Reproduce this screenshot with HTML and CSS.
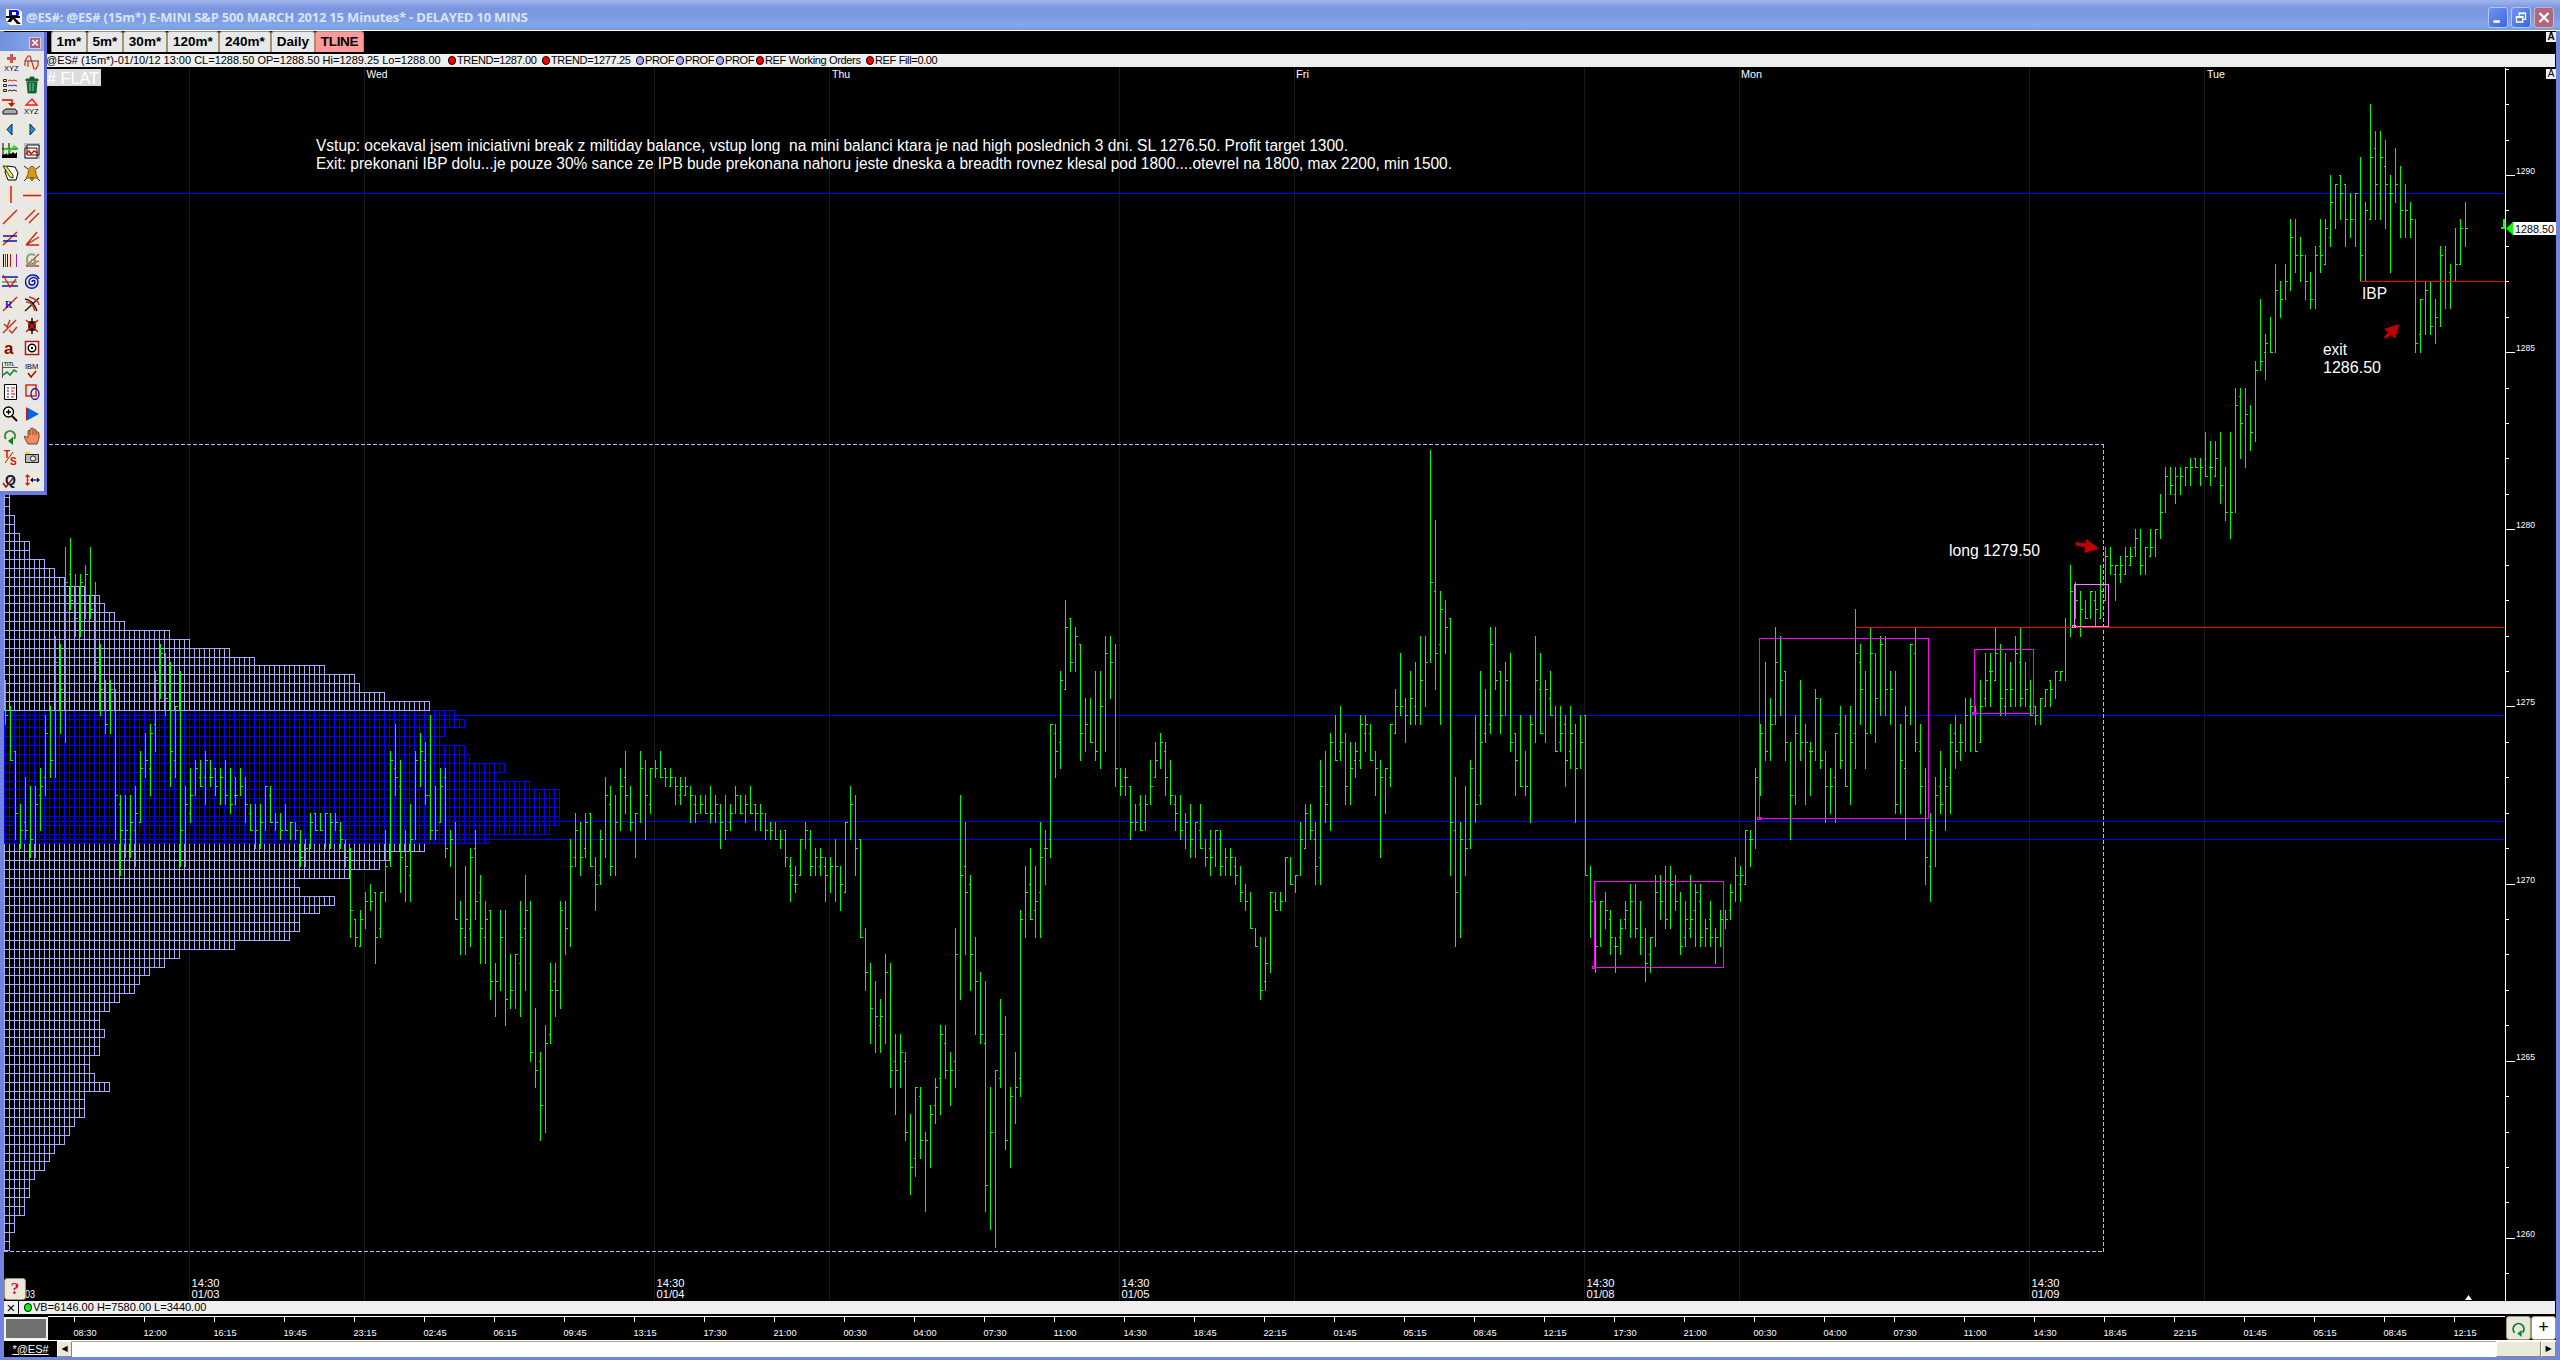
FILE: index.html
```html
<!DOCTYPE html>
<html lang="en">
<head>
<meta charset="utf-8">
<title>@ES# (15m*)</title>
<link rel="stylesheet" href="styles.css">
</head>
<body>
<div class="window">
  <header class="titlebar">
    <svg class="logo" viewBox="0 0 16 16"><path d="M0 0h12l4 3v13H4L0 12z" fill="#fff"/><path d="M3 1h7q4 0 3 4t-4 3H3zM6 3v3h4V3z" fill="#0a0ad0" fill-rule="evenodd"/><path d="M0 7h14v2H9l6 6h-4L7 10l-2 3H1l3-4H0z" fill="#000"/></svg>
    <h1 class="title">@ES#: @ES# (15m*) E-MINI S&amp;P 500 MARCH 2012 15 Minutes* - DELAYED 10 MINS</h1>
    <div class="winbtns">
      <svg class="winbtn" viewBox="0 0 20 20"><rect x="5" y="13" width="7" height="3" fill="#fff"/></svg>
      <svg class="winbtn" viewBox="0 0 20 20"><path d="M8 8V5.500h7V12h-2M5 9.500h7V15H5z" fill="none" stroke="#fff" stroke-width="1.400"/><path d="M7.300 5.500h8.400M4.300 9.200h8.400" stroke="#fff" stroke-width="2"/></svg>
      <svg class="winbtn winbtn-close" viewBox="0 0 20 20"><path d="M5 5l10 10M15 5L5 15" stroke="#fff" stroke-width="2.400"/></svg>
    </div>
  </header>
  <main class="content">
    <nav class="tabs">
      <span class="tab t36">1m*</span><span class="tab t36">5m*</span><span class="tab t44">30m*</span><span class="tab t52">120m*</span><span class="tab t52">240m*</span><span class="tab t44">Daily</span><span class="tab t49 tab-on">TLINE</span>
      <span class="flag flag-bold">A</span>
    </nav>
    <div class="info">
      <span class="readout">@ES# (15m*)-01/10/12 13:00 CL=1288.50 OP=1288.50 Hi=1289.25 Lo=1288.00</span>
      <span class="study"><i class="dot red"></i>TREND=1287.00</span>
      <span class="study"><i class="dot red"></i>TREND=1277.25</span>
      <span class="study"><i class="dot lilac"></i>PROF</span>
      <span class="study"><i class="dot lilac"></i>PROF</span>
      <span class="study"><i class="dot lilac"></i>PROF</span>
      <span class="study"><i class="dot red"></i>REF Working Orders</span>
      <span class="study"><i class="dot red"></i>REF Fill=0.00</span>
    </div>
    <section class="plot">
      <svg id="chart" class="chart" viewBox="4 67 2552 1234"></svg>
      <span class="flag flag-plot">A</span>
      <span class="help">?</span>
    </section>
    <div class="status">
      <span class="statusclose">×</span>
      <span class="study wide"><i class="dot green"></i>VB=6146.00 H=7580.00 L=3440.00</span>
    </div>
    <div class="timeline">
      <span class="pager"></span>
      <svg id="times" class="times" viewBox="48 1316 2457 25"></svg>
      <span class="tool tool-refresh"><svg viewBox="0 0 20 20"><path d="M5 14A6 6 0 1 1 14 14" fill="none" stroke="#0a7d1a" stroke-width="2"/><path d="M8 15l5-4v8z" fill="#0a8a1a"/></svg></span>
      <span class="tool tool-add">+</span>
    </div>
    <footer class="scroll">
      <span class="sheet">*@ES#</span>
      <span class="arrow">◀</span>
      <span class="track"></span>
      <span class="thumb"></span>
      <span class="arrow">▶</span>
    </footer>
  </main>
</div>

<aside class="palette">
  <div class="palhead"><span class="palclose">×</span></div>
  <div class="icons">
    <svg viewBox="0 0 20 20"><path d="M10 1h3v3h3v3h-3v3h-3V7H7V4h3z" fill="#c55"/><text x="4" y="17.500" class="tiny">XYZ</text></svg>
    <svg viewBox="0 0 20 20"><path d="M3 8h14" stroke="#267" stroke-width="1.200"/><path d="M3 13V8L6 3h2l4 13h2l2-4V8M6 8v6" fill="none" stroke="#d22" stroke-width="1.200"/></svg>
    <svg viewBox="0 0 20 20"><path d="M3.500 4.500h3v2h-3zM3.500 9.500h3v2h-3zM3.500 14.500h3v2h-3z" fill="none" stroke="#222"/><path d="M8 6l2-1 2 1 2-1 3 1" stroke="#d22" fill="none"/><path d="M8 11l2-1 2 1 2-1 3 1" stroke="#22d" fill="none"/><path d="M8 16l2-1 2 1 2-1 3 1" stroke="#222" fill="none"/></svg>
    <svg viewBox="0 0 20 20"><path d="M4 4h12v2H4zM8 2h4v2H8zM5 7h10l-1 11H6z" fill="#17683f" stroke="#052" stroke-width=".8"/><path d="M8 8v8M11 8v8" stroke="#7c9"/></svg>
    <svg viewBox="0 0 20 20"><path d="M2 3h10v4" fill="none" stroke="#d00" stroke-width="1.400"/><path d="M8 6h7l-3.500 4z" fill="#d00"/><path d="M3 14l3-2h9l2 2v3H3z" fill="#aaa" stroke="#111"/></svg>
    <svg viewBox="0 0 20 20"><path d="M10 2l5 6H4z" fill="none" stroke="#f11" stroke-width="1.300"/><text x="2" y="16.500" class="tiny">XYZ</text></svg>
    <svg viewBox="0 0 20 20"><path d="M12 5v11L7 10.500z" fill="#19e" stroke="#026"/></svg>
    <svg viewBox="0 0 20 20"><path d="M8 5v11l5-5.500z" fill="#19e" stroke="#026"/></svg>
    <svg viewBox="0 0 20 20"><path d="M2 17v-3l2-1 1 1 1-2 2 2 2-2 1 1 2-2 2 2 2-2v6z" fill="#000"/><path d="M3 2v15M9 2v15M2 8h16" stroke="#000"/><path d="M3 10l4-3 3 3 4-5 4 3" fill="none" stroke="#1e1" stroke-width="1.600"/></svg>
    <svg viewBox="0 0 20 20"><path d="M2 2h16v16H2z" fill="#bbb"/><path d="M5 4h12v10H5zM3 7h12v10H3z" fill="#fff" stroke="#111"/><path d="M4 13l3-3 2 3 3-3 4 2" fill="none" stroke="#d11" stroke-width="1.600"/></svg>
    <svg viewBox="0 0 20 20"><path d="M7 3l8 1 3 6-2 7H8L5 9z" fill="#fff" stroke="#000"/><path d="M3 3l3 0 7 9v3l-3-1z" fill="#ee4" stroke="#000" stroke-width=".8"/></svg>
    <svg viewBox="0 0 20 20"><path d="M2 3l4 3M18 3l-4 3M2 18l3-3M18 18l-3-3" stroke="#222"/><path d="M10 3q4 1 4 8l2 4H4l2-4q0-7 4-8zM8 15h4l-2 3z" fill="#d59a16" stroke="#742" stroke-width=".8"/></svg>
    <svg viewBox="0 0 20 20"><path d="M11 1v17" stroke="#e11" stroke-width="1.500"/></svg>
    <svg viewBox="0 0 20 20"><path d="M1 10.500h18" stroke="#d11" stroke-width="1.500"/></svg>
    <svg viewBox="0 0 20 20"><path d="M3 17L17 3" stroke="#c22" stroke-width="1.400"/></svg>
    <svg viewBox="0 0 20 20"><path d="M3 13L13 3M7 16L17 6" stroke="#c22" stroke-width="1.400"/></svg>
    <svg viewBox="0 0 20 20"><path d="M3 16L17 3" stroke="#c22" stroke-width="1.400"/><path d="M3 7h14M3 12h14" stroke="#11b" stroke-width="1.300"/></svg>
    <svg viewBox="0 0 20 20"><path d="M4 16L15 3M4 16l13-8M4 16h13" stroke="#c22" stroke-width="1.300"/></svg>
    <svg viewBox="0 0 20 20"><path d="M3.500 4v13" stroke="#111"/><path d="M5.500 4v13" stroke="#172"/><path d="M7.500 4v13" stroke="#11b"/><path d="M10.500 4v13" stroke="#c11"/><path d="M16.500 4v13" stroke="#82c"/></svg>
    <svg viewBox="0 0 20 20"><path d="M4 16L17 4M4 16l13-5M4 16h13" stroke="#d33" stroke-width="1.300"/><path d="M13 5Q5 2 5 10t8 4v-4H9" fill="none" stroke="#7a8" stroke-width="2"/></svg>
    <svg viewBox="0 0 20 20"><path d="M2 5h16M2 14h16" stroke="#11b" stroke-width="1.300"/><path d="M2 10h15" stroke="#172"/><path d="M3 3l7 12 6-8" fill="none" stroke="#c22" stroke-width="1.300"/></svg>
    <svg viewBox="0 0 20 20"><path d="M10 10a1.500 1.500 0 0 1 3 0a3 3 0 0 1-6 0a4.500 4.500 0 0 1 9 0a6 6 0 0 1-12.500 0a7 7 0 0 1 7-7q5 0 6.500 4" fill="none" stroke="#01c" stroke-width="1.400"/></svg>
    <svg viewBox="0 0 20 20"><path d="M3 17L17 3" stroke="#c22" stroke-width="1.400"/><text x="5" y="14" class="letter blue">R</text></svg>
    <svg viewBox="0 0 20 20"><path d="M3 17L17 4M3 5q8 1 12 12" stroke="#111" fill="none" stroke-width="1.300"/><path d="M4 8q7 0 9 9M7 3q9 2 10 8" stroke="#c33" fill="none" stroke-width="1.500"/></svg>
    <svg viewBox="0 0 20 20"><path d="M3 17L16 4M4 8l3 3 3-7M9 14l3 3 5-6" stroke="#b33" fill="none" stroke-width="1.500"/></svg>
    <svg viewBox="0 0 20 20"><path d="M10 2v16M7 6h6v8H7z" stroke="#111" fill="#111" stroke-width="1.500"/><path d="M4 4l12 12M16 4L4 16" stroke="#e11" stroke-width="1.400"/></svg>
    <svg viewBox="0 0 20 20"><text x="4" y="16" class="letter big">a</text></svg>
    <svg viewBox="0 0 20 20"><path d="M3.500 3.500h13v13h-13z" fill="#fff" stroke="#b11" stroke-width="1.500"/><circle cx="10" cy="10" r="3.800" fill="none" stroke="#000" stroke-width="1.500"/><circle cx="10" cy="10" r="1.200"/></svg>
    <svg viewBox="0 0 20 20"><path d="M2.500 2v16M2 7.500h16" stroke="#555"/><text x="4" y="6" class="micro">TITL</text><path d="M3 15l4-3 3 3 4-5 3 2" fill="none" stroke="#184" stroke-width="1.600"/></svg>
    <svg viewBox="0 0 20 20"><text x="3" y="9" class="tiny">IBM</text><path d="M6 13l3 4 5-6" fill="none" stroke="#911" stroke-width="1.500"/></svg>
    <svg viewBox="0 0 20 20"><path d="M4.500 2.500h12v15h-12z" fill="#fff" stroke="#000"/><path d="M7 6h2M7 9h2M7 12h2M7 15h2" stroke="#111"/><path d="M11 6h4M11 9h3M11 12h4M11 15h3" stroke="#c11"/></svg>
    <svg viewBox="0 0 20 20"><path d="M4 3h10v11H4z" fill="none" stroke="#d22" stroke-width="1.500"/><ellipse cx="13" cy="12" rx="4" ry="5.500" fill="none" stroke="#11c" stroke-width="1.300"/></svg>
    <svg viewBox="0 0 20 20"><circle cx="8.500" cy="8" r="5" fill="#fff" stroke="#000" stroke-width="1.300"/><path d="M6 8h5M8.500 5.500v5" stroke="#000" stroke-width="1.400"/><path d="M12 12l5 5" stroke="#000" stroke-width="2"/></svg>
    <svg viewBox="0 0 20 20"><path d="M4 3l4 3v8l-4 3z" fill="#c12"/><path d="M6 4l11 6-11 6z" fill="#06e"/></svg>
    <svg viewBox="0 0 20 20"><path d="M6 13A5 5 0 1 1 14 13" fill="none" stroke="#385" stroke-width="2"/><path d="M8 15l5-4v8z" fill="#0a7d1a"/></svg>
    <svg viewBox="0 0 20 20"><path d="M6 18L2 11l1-1 3 2V5q1-2 2 0 0-3 2-3t2 2q1-1 2 0v2q2-1 3 1v5l-2 6z" fill="#f98a5c" stroke="#432" stroke-width=".8"/><path d="M8 5v4M11 4v5M14 6v3" stroke="#632" stroke-width=".8"/></svg>
    <svg viewBox="0 0 20 20"><text x="4" y="10" class="letter red">T</text><text x="10" y="17" class="letter red">S</text><path d="M5 15L13 4" stroke="#c11"/></svg>
    <svg viewBox="0 0 20 20"><path d="M3.500 6.500h13v8h-13z" fill="#bbb" stroke="#222"/><circle cx="11" cy="10.500" r="2.600" fill="#eee" stroke="#222"/><path d="M4 5h4" stroke="#dd3" stroke-width="2"/></svg>
    <svg viewBox="0 0 20 20"><text x="5" y="15" class="letter navy">Q</text><path d="M3 13l3 4L14 7" fill="none" stroke="#911" stroke-width="1.500"/></svg>
    <svg viewBox="0 0 20 20"><path d="M5.500 5v10" stroke="#e11" stroke-width="1.400"/><path d="M3 7l2.500-3L8 7zM3 13l2.500 3L8 13z" fill="#e11"/><path d="M9 10h8" stroke="#016" stroke-width="1.200"/><path d="M11 7.500L8 10l3 2.500zM15 7.500l3 2.500-3 2.500z" fill="#016"/></svg>
  </div>
</aside>
<script src="chart.js"></script>
</body>
</html>
```
FILE: styles.css
```css
* { box-sizing: border-box; }
body {
  margin: 0;
  width: 2560px;
  height: 1360px;
  overflow: hidden;
  background: #000;
  font-family: "Liberation Sans", Arial, sans-serif;
  font-size: 11px;
}
.window { display: flex; flex-direction: column; height: 1360px; }
.titlebar {
  display: flex;
  align-items: center;
  height: 31px;
  padding: 2px 6px 0 6px;
  border-bottom: 1px solid #fff;
  background: linear-gradient(#9cb6ef 0, #98aeea 2px, #7a96df 8px, #7a96df 15px, #82a8ea 25px, #7b9be3 30px);
}
.logo { width: 16px; height: 16px; margin-top: 1px; }
.title {
  flex: 1;
  margin: 1px 0 0 4px;
  font: bold 13px "Open Sans", sans-serif;
  letter-spacing: -0.18px;
  color: #d8e4f8;
  white-space: nowrap;
}
.winbtns { display: flex; gap: 3px; margin-top: 2px; }
.winbtn {
  width: 20px;
  height: 21px;
  border: 1px solid #b6c6f4;
  border-radius: 3px;
  background: linear-gradient(135deg, #6f95ee, #3c66dc);
}
.winbtn-close { background: #b0687c; border-color: #cdb3cf; }

.content {
  flex: 1;
  display: flex;
  flex-direction: column;
  border: solid #7384dd;
  border-width: 0 4px 3px 4px;
  border-bottom-color: #6f86de;
}
.tabs { display: flex; align-items: flex-start; height: 23px; padding-left: 47px; }
.tab {
  height: 21px;
  border: solid #a3956a;
  border-width: 1px 1px 0 1px;
  border-radius: 3px 3px 0 0;
  background: #e8e8e8;
  font: bold 13.5px/19px "Liberation Sans", sans-serif;
  text-align: center;
  white-space: nowrap;
}
.t36 { width: 36px; }
.t44 { width: 44px; }
.t49 { width: 49px; }
.t52 { width: 52px; }
.tab-on { background: #ff9a9a; letter-spacing: -0.3px; }
.flag { width: 10px; height: 10px; background: #eee; font-size: 10px; line-height: 10px; text-align: center; }
.flag-bold { margin: 1px 0 0 auto; font-weight: bold; }
.flag-plot { position: absolute; right: 0; top: 2px; }
.info {
  display: grid;
  grid-template-columns: 402px 94px 94px 40px 40px 40px 110px 1fr;
  height: 13px;
  margin-right: 1px;
  padding-left: 42px;
  background: #efefef;
  line-height: 13px;
  white-space: nowrap;
}
.study { display: flex; align-items: center; letter-spacing: -0.35px; }
.study.wide { letter-spacing: 0; }
.dot { width: 8px; height: 9px; margin-right: 1px; border: 1px solid #000; border-radius: 4px; }
.red { background: #f00; }
.lilac { background: #aaaaff; }
.green { background: #0f0; }

.plot { position: relative; height: 1234px; }
.chart { display: block; width: 2552px; height: 1234px; }
.chart text, .times text { fill: #fff; font-family: "Liberation Sans", sans-serif; }
.help {
  position: absolute;
  left: 0;
  bottom: 1px;
  width: 22px;
  height: 22px;
  border: 1px solid #a3956a;
  border-radius: 3px;
  background: #ece9dc;
  color: #e01020;
  font: bold 17px/20px "Liberation Serif", serif;
  text-align: center;
}
.status { display: flex; height: 13px; margin-right: 1px; background: #efefef; line-height: 13px; }
.statusclose { width: 15px; margin-right: 5px; border-right: 1px solid #000; font-size: 15px; text-align: center; }
.timeline { display: flex; height: 25px; margin-top: 2px; border-bottom: 1px solid #fff; }
.pager { width: 44px; height: 23px; margin-top: 1px; border: 2px solid #f4f2e6; background: #707070; }
.times { width: 2457px; height: 25px; }
.tool { width: 25px; height: 24px; border: 1px solid #a3956a; border-radius: 3px; text-align: center; }
.tool svg { width: 18px; height: 20px; margin-top: 2px; }
.tool-refresh { margin-left: 1px; background: #e8e6e0; }
.tool-add { background: #fff; font: 18px/21px "Liberation Sans", sans-serif; }
.scroll { display: flex; height: 16px; background: #fff; }
.sheet { width: 53px; background: #000; color: #fff; font-size: 11px; line-height: 16px; text-align: center; text-decoration: underline; }
.arrow {
  width: 15px;
  border: 1px solid;
  border-color: #fff #8a8672 #8a8672 #fff;
  background: #ece9d8;
  font: 8px/13px "DejaVu Sans", sans-serif;
  text-align: center;
}
.track { flex: 1; border-top: 1px solid #aaa690; }
.thumb { width: 45px; border: 1px solid; border-color: #fff #8a8672 #8a8672 #fff; background: #ece9d8; }

.palette {
  position: absolute;
  left: 0;
  top: 32px;
  width: 47px;
  height: 463px;
  border: solid #6c7fe0;
  border-width: 0 3px 4px 0;
  border-right-color: #5a68d0;
  background: #e8e8e8;
}
.palhead {
  display: flex;
  justify-content: flex-end;
  height: 19px;
  padding: 5px 3px 0 0;
  background: linear-gradient(90deg, #7090de, #8eaaea);
}
.palclose { width: 12px; height: 12px; background: #a8607c; border: 1px solid #e0c8dc; color: #fff; font: bold 13px/10px "Liberation Sans", sans-serif; text-align: center; }
.icons { display: grid; grid-template-columns: 20px 20px; column-gap: 2px; grid-auto-rows: 21.95px; padding-top: 2px; }
.icons svg { width: 20px; height: 20px; background: linear-gradient(#ece9d8, #ece9d8) center / 16px 16px no-repeat; }
.tiny { font: 7.5px "Liberation Sans", sans-serif; fill: #005; }
.micro { font: bold 5px "Liberation Sans", sans-serif; fill: #333; }
.letter { font: bold 10px "Liberation Sans", sans-serif; }
.letter.big { font-size: 17px; fill: #8c0000; }
.letter.blue { fill: #11c; font-family: "Liberation Serif", serif; }
.letter.red { fill: #c11; }
.letter.navy { font-size: 14px; fill: #024; }
```
FILE: chart.js
```javascript
// Every price tick (0.25) is TICK pixels high; ORIGIN is the row of 1290.00.
const TICK = 8.858, ORIGIN = 175.45;
const row = n => Math.floor(ORIGIN + n * TICK);

// Blocks of consecutive 15 minute bars. Values are [high, low, close, open],
// measured down from `top` with `unit` steps per pixel; open is left out when
// it equals the previous close.
const blocks = [
{ first: 1, top: 480, unit: 3, bars: [
[600,735,706,679],[679,838,838],[814,1078,1000,814],[973,1107,1051],[892,1078,1051,1024],[919,1133,1078],[919,1133,973],[865,1051,919,946],[705,946,760,892],[679,892,838],
[465,892,547],[492,762,628,520],[201,788,307,652],[175,388,361,280],[280,467,415,388],[280,467,307],[255,415,280],[201,415,388],[307,600,547],[492,706,628],
[600,762,733],[600,762,628],[628,1078,946,652],[946,1187,1051,973],[946,1133,1051,1078],[946,1133,1024,1078],[919,1160,1000,1051],[814,1024,865,1024],[760,892,838],[733,946,760,865],
[574,814,601,733],[492,652,520],[520,706,652],[547,919,814],[679,892,679,838],[574,1160,1051],[919,1160,973],[865,1024,946,1000],[838,946,865],[838,919,919,892],
[814,973,838,892],[838,919,892,892],[865,946,919,865],[865,973,892],[838,973,946],[865,1000,973],[892,973,946,946],[865,946,919],[892,1024,973],[973,1051,1051,1000],
[973,1106,1051],[973,1106,1024],[919,1051,919],[919,1024,1024,946],[1000,1051,1024],[1000,1078,1051],[973,1051,1051],[1024,1078,1024],[1024,1078,1051],[1051,1160,1133],
[1078,1160,1106],[1000,1106,1024],[1000,1051,1051,1000],[1000,1051,1051],[1000,1106,1000],[1000,1106,1024],[1000,1051,1024],[1024,1106,1078,1051],[1078,1160,1133,1106],[1106,1372,1291,1106],
[1318,1396,1372,1318],[1291,1396,1318,1396],[1237,1346,1264],[1210,1291,1264],[1237,1451,1372,1237],[1237,1372,1237,1346],[1051,1265,1160],[814,1160,838],[733,946,892,865],[838,1238,1133,919],
[1051,1265,1160],[973,1265,1078,1187],[814,1078,838],[760,919,814],[787,973,946,838],[706,1078,1051,946],[919,1078,1051],[865,1024,919,1024],[865,1133,1106,892],[1051,1160,1078],
[1024,1318,1318],[1264,1424,1346],[1160,1424,1318,1372],[1106,1396,1133,1345],[1051,1318,1264,1106],[1187,1451,1346,1237],[1264,1451,1318,1372],[1291,1558,1504,1291],[1450,1610,1504],[1291,1532,1372],
[1291,1637,1558],[1423,1583,1531],[1423,1583,1423],[1264,1610,1372,1450],[1187,1532,1291,1346],[1264,1745,1717],[1581,1824,1768],[1717,1982,1876,1744],[1635,1956,1690],[1450,1690,1531,1663],[1450,1610,1531,1504]] },
{ first: 112, top: 580, unit: 2.306, bars: [
[740,987,762],[740,865,803],[598,843,660],[537,661,577,639],[557,683,639],[537,640,557,619],[538,661,660,538],[639,762,700],[577,700,598,682],[454,640,496],
[475,683,660,518],[496,683,557],[434,578,475],[394,539,496,455],[475,578,557],[538,640,538],[394,557,434],[413,600,496],[434,539,434,517],[413,457,434],
[394,456,455],[434,476,455,434],[434,476,455,475],[454,518,475],[454,518,475,496],[454,497,475,496],[475,557,496],[496,557,538,517],[496,539,517],[496,539,538],
[475,557,538],[496,557,517],[517,619,557,538],[496,600,577],[517,578,538,557],[475,539,496],[496,539,538],[496,557,517],[475,539,538],[517,578,538,517],
[517,578,538],[538,600,577],[557,600,577],[557,600,598],[577,619,598],[577,661,640,577],[640,741,682,660],[660,721,700,700],[598,683,598,682],[557,619,577],
[577,683,660,598],[619,683,640],[619,683,640,660],[640,741,682,660],[640,721,660],[598,741,660],[660,762,700],[557,721,557,720],[475,600,517],[496,683,619],
[598,825,824,598],[803,947,905],[884,1070,986],[925,1091,1006],[966,1091,1006,1027],[863,1070,905],[884,1171,1129],[1047,1233,1129,1109],[1047,1171,1089],[1089,1294,1272,1109],
[1231,1416,1355],[1170,1377,1170,1333],[1170,1335,1292,1191],[1272,1457,1292],[1211,1356,1232],[1149,1253,1170,1212],[1026,1233,1048,1149],[1026,1150,1129,1069],[1089,1212,1129],[803,1171,863,1109],
[496,967,682],[557,865,720,660],[680,947,863,700],[823,1049,925],[905,1070,1048],[925,1457,1396,1069],[1170,1499,1272],[1129,1540,1129],[966,1171,1048,1149],[1005,1314,1292],
[1170,1356,1191],[1089,1253,1170],[762,1191,782,1149],[660,825,720],[619,783,782,700],[660,825,741,762],[557,825,640,720],[577,700,619,619],[332,640,332,598],[332,457,395,353],
[210,435,232,375],[46,252,109,252],[89,211,190,89],[109,211,128],[149,414,353,149],[270,396,332],[270,376,375],[210,414,395],[210,435,292],[128,396,169],
[128,272,190],[149,476,434],[434,497,475],[434,497,455,455],[475,600,557,475],[517,578,557]] },
{ first: 228, top: 430, unit: 2.613, bars: [
[954,1047,1046,978],[954,1047,978,1023],[860,979,931],[815,908,860,908],[792,885,816],[815,955,908,840],[860,979,955],[954,1047,1001,978],[954,1070,1046],[1001,1094,1023],
[978,1118,1070],[1023,1118,1023],[978,1094,1093,1046],[1070,1141,1117],[1046,1165,1117,1093],[1046,1141,1046],[1046,1165,1140,1070],[1093,1165,1117],[1093,1165,1117],[1117,1186,1164,1140],
[1140,1232,1208],[1185,1256,1232],[1208,1303,1302],[1302,1347,1347],[1326,1490,1464],[1326,1466,1394,1441],[1208,1418,1208],[1208,1256,1255,1232],[1208,1256,1232],[1117,1232,1117],
[1117,1185,1185],[1164,1209,1164],[1023,1165,1070],[978,1094,1001,1093],[978,1070,1046],[1023,1186,1140,1070],[860,1186,931,1117],[839,1023,978],[792,1047,816],[745,861,860],
[721,861,816,840],[792,979,931],[815,979,884],[815,908,840,860],[745,885,769,860],[745,840,769,792],[769,861,860,792],[839,955,884],[860,1118,908],[884,1003,884],
[769,932,769,908],[677,793,722,793],[583,746,722],[698,817,745],[630,770,698],[606,770,745,722],[536,770,654],[536,723,607],[50,608,398],[235,678,584,422],
[421,770,468,560],[444,584,516],[492,1165,1023,492],[907,1347,1208,1046],[1023,1327,1070],[931,1165,1093],[860,1094,884,1070],[745,1023,978],[630,979,816,955],[677,817,745,793],
[515,793,560,769],[515,678,654],[630,793,745,630],[606,746,654],[583,840,816],[793,955,860,793],[745,932,931],[839,955,931],[745,1023,769],[536,817,654],
[583,793,793,678],[654,817,678],[630,746,745,698],[722,840,840],[722,840,793,816],[745,932,860,769],[722,885,793,840],[769,1023,884],[745,885,816],[745,1165,1164,745],
[1140,1327,1232],[1232,1418,1347],[1232,1347,1232],[1208,1303,1255],[1255,1371,1326,1279],[1326,1418,1347,1347],[1279,1371,1302,1326],[1232,1303,1255,1279],[1185,1327,1232],[1185,1327,1302],
[1232,1371,1326],[1302,1442,1394],[1326,1418,1326,1371],[1164,1347,1208],[1164,1280,1232],[1140,1303,1279],[1140,1303,1185],[1164,1256,1232],[1208,1371,1347],[1232,1347,1279,1326],
[1164,1327,1279,1302],[1185,1347,1208,1255],[1185,1347,1326,1232],[1279,1347,1302],[1232,1347,1326,1279],[1302,1395,1326],[1255,1347,1279],[1255,1303,1279],[1185,1280,1208,1255],[1117,1232,1164],
[1140,1232,1164,1185],[1046,1186,1046,1185],[1046,1141,1070,1070],[883,1094,908]] },
{ first: 352, top: 540, unit: 3, bars: [
[552,768,580],[366,660,634],[471,660,553],[261,555,367,526],[285,528,421],[393,660,607,394],[606,900,766],[525,795,580],[420,660,607],[552,795,607],
[606,768,634,634],[447,660,472],[471,686,658],[633,846,739],[684,822,739],[579,846,580,712],[498,686,658,553],[525,741,739],[498,795,607],[207,686,340,580],
[312,555,448,367],[393,686,580],[261,582,340],[339,609,472],[285,528,313],[285,528,448],[393,555,448],[393,822,793],[552,822,658],[498,900,526,685],
[312,555,313],[261,636,607,340],[552,822,739,634],[684,1032,952],[819,1086,871,979],[711,981,766],[633,822,793,739],[684,873,739],[552,822,607,712],[525,686,634,580],
[552,660,607,607],[471,636,526],[471,636,499],[498,634,634],[420,609,499,607],[339,501,421,472],[339,501,394,394],[261,421,340,421],[312,528,472],[339,528,448,499],
[366,501,448],[285,501,340],[261,501,472,367],[366,501,448],[420,528,526,499],[498,555,526,499],[471,555,472],[447,500,448,499],[420,501,448,421],[394,474,394],
[394,422,394,421],[234,423],[75,288,154],[126,237,181],[153,288,208],[180,236,235],[153,236,154],[153,261,208,181],[75,236,154,235],[21,182,49,181],[21,102,76]] },
{ first: 423, top: 80, unit: 3, bars: [
[1456,1562,1456,1480],[1428,1509,1456,1480],[1401,1482,1429,1480],[1401,1458,1429,1456],[1347,1431,1375,1402],[1347,1482,1456],[1402,1482,1402],[1347,1431,1402,1429],[1347,1431,1348],[1242,1377,1294],
[1161,1296,1189],[1161,1245,1216],[1161,1272,1189,1243],[1161,1245,1189],[1161,1218,1162],[1134,1218,1162],[1135,1163,1162,1135],[1134,1218,1162],[1056,1190,1189],[1083,1218,1162,1162],
[1083,1190,1135,1189],[1056,1272,1216],[1161,1323,1294],[1056,1377,1294],[921,1296,976],[921,1137,1030,949],[921,1164,1003],[975,1110,1057],[843,1086,871],[657,873,844],
[762,900,790,817],[711,819,817],[549,819,631],[603,714,658],[549,660,604],[417,633,472],[417,579,526],[471,606,526],[525,660,604],[576,687,658],
[498,687,526],[417,579,526,499],[417,550,445,550],[285,501,364,472],[312,447,313],[286,420,340,286],[312,501,418,313],[339,474,418],[339,501,340],[231,605,526],
[363,604,391],[72,418,232,418],[153,420,313,205],[153,420,232,340],[177,447,313,259],[285,579,340,340],[204,366,313],[258,474,391],[312,474,391],[363,474,418],
[417,819,790],[657,819,658,763],[604,766,631],[604,766,736],[657,792,712],[498,739,526],[498,687,604],[549,687,604,577],[444,604,550],[417,552,445,550],[363,501,445]] }
];

// Volume profile: number of 5px cells in each tick row, top to bottom.
const profile = [1,1,2,2,3,5,5,8,10,12,16,19,20,22,24,33,37,45,50,64,70,71,76,85,
90,92,88,87,92,93,100,98,105,111,111,111,111,109,97,
84,77,75,69,58,59,66,63,59,59,57,46,35,32,29,27,26,23,21,19,19,20,19,19,17,17,18,21,16,16,16,14,13,12,10,9,8,6,5,5,4,4,2,2,1,1];
const VALUE_AREA = [24, 38];

const out = [];
const rect = (x, y, w, h, fill) => out.push(`<rect x="${x}" y="${y}" width="${w}" height="${h}" fill="${fill}"/>`);
const hline = (x1, x2, y, fill) => rect(x1, y, x2 - x1, 1, fill);
const label = (x, y, size, text, width, extra = '') =>
  out.push(`<text x="${x}" y="${y}" font-size="${size}" ${width ? `textLength="${width}" lengthAdjust="spacingAndGlyphs"` : ''} ${extra}>${text}</text>`);

out.push('<g shape-rendering="crispEdges">');
for (const x of [189, 364, 654, 829, 1119, 1294, 1584, 1739, 2029, 2204]) rect(x, 67, 1, 1234, '#191919');

const edge = k => Math.floor(497.6 + k * TICK);
const grid = (from, to, color) => {
  let d = '';
  for (let k = from; k <= to; k++) {
    const n = k < 0 ? 1 : profile[k], y = edge(k), h = edge(k + 1) - y;
    const w = n * 5 + 1;
    d += `M4 ${y}h${w}v1h-${w}zM4 ${y + h}h${w}v1h-${w}z`;
    for (let c = 0; c <= n; c++) d += `M${4 + 5 * c} ${y}h1v${h}h-1z`;
  }
  out.push(`<path d="${d}" fill="${color}"/>`);
};
grid(VALUE_AREA[0], VALUE_AREA[1], '#0000ff');
grid(-1, VALUE_AREA[0] - 1, '#aaaaff');
grid(VALUE_AREA[1] + 1, profile.length - 1, '#aaaaff');
rect(4, edge(VALUE_AREA[1] + 1), 486, 1, '#0000ff');

for (const y of [193, 715, 821, 839]) hline(4, 2504, y, '#0000ff');
out.push('<path d="M49 444.5H2104M2103.5 444V1252M4 1251.5H2104" fill="none" stroke="#b4b4ff" stroke-dasharray="4 2"/>');

let bars = '';
for (const b of blocks) b.bars.forEach(([hi, lo, close, open], i) => {
  const x = 5 * (b.first + i);
  const r = v => row(Math.round((b.top + v / b.unit - ORIGIN - 0.3) / TICK));
  bars += `M${x} ${r(hi)}h1V${r(lo) + 1}h-1z`;
  if (close !== undefined) bars += `M${x} ${r(close)}h3v1h-3z`;
  if (open !== undefined) bars += `M${x - 1} ${r(open)}h1v1h-1z`;
});
out.push(`<path d="${bars}" fill="#00ff00"/>`);

hline(1855, 2505, 627, '#ff0000');
hline(2360, 2505, 281, '#ff0000');

const box = (x1, y1, x2, y2, color) => out.push(
  `<rect x="${x1 + .5}" y="${y1 + .5}" width="${x2 - x1}" height="${y2 - y1}" fill="none" stroke="${color}"/>` +
  `<rect x="${x1 - 1.5}" y="${y2 - .5}" width="3" height="2" fill="none" stroke="${color}"/>`);
box(1594, 881, 1723, 967, '#ff00ff');
box(1759, 638, 1928, 818, '#ff00ff');
box(1974, 649, 2033, 713, '#ff00ff');
box(2074, 584, 2108, 626, '#ff80ff');

rect(2505, 68, 1, 1233, '#fff');
hline(2506, 2509, 69, '#fff');
for (let p = 1292; p >= 1259; p--) hline(2506, p % 5 ? 2509 : 2515, row((1290 - p) * 4), '#fff');
rect(2503, 219, 2, 10, '#00ff00');
rect(2501, 227, 3, 2, '#00ff00');
rect(2513, 222, 43, 13, '#fff');
out.push('</g>');

out.push('<path d="M2506 228.500l7-6.500v13z" fill="#0f0"/><path d="M2468.500 1295l3.500 5h-7z" fill="#fff"/>');
out.push('<path d="M2399.300 324L2395.300 338.700L2390.300 335L2385.700 339.300L2384 336.700L2388 332.300L2384 328.700zM2099.300 548.700L2086 539L2085.500 543.200L2075.500 542V545.500L2085 547.500L2084 553z" fill="#c00000"/>');
label(2515, 233, 11, '1288.50', 39, 'style="fill:#000"');
for (let p = 1290; p >= 1260; p -= 5) label(2516, row((1290 - p) * 4) - 1, 9.5, p, 19);

[[366.500, 'Wed', 21], [832, 'Thu', 18], [1296, 'Fri', 13], [1741, 'Mon', 21], [2207, 'Tue', 18]].forEach(([x, t, w]) => label(x, 78, 11, t, w));
[['01/03', 191.5], ['01/04', 656.5], ['01/05', 1121.5], ['01/08', 1586.5], ['01/09', 2031.5]].forEach(([d, x]) => {
  label(x, 1287, 11, '14:30', 28);
  label(x, 1298, 11, d, 28);
});
label(25, 1298, 11, '03', 10);

rect(46, 69, 55, 17, '#dcdcdc');
label(47, 84, 17, '# FLAT', 52);
label(316, 151, 16, 'Vstup: ocekaval jsem iniciativni break z miltiday balance, vstup long&#160; na mini balanci ktara je nad high poslednich 3 dni. SL 1276.50. Profit target 1300.', 1032);
label(316, 169, 16, 'Exit: prekonani IBP dolu...je pouze 30% sance ze IPB bude prekonana nahoru jeste dneska a breadth rovnez klesal pod 1800....otevrel na 1800, max 2200, min 1500.', 1136);
label(1949, 556, 16, 'long 1279.50', 91);
label(2362, 299, 16, 'IBP', 25);
label(2323, 355, 16, 'exit', 24);
label(2323, 373, 16, '1286.50', 58);
document.getElementById('chart').innerHTML = out.join('');

// Lower time ruler, one label every 70px.
const times = ['08:30','12:00','16:15','19:45','23:15','02:45','06:15','09:45','13:15','17:30','21:00','00:30','04:00','07:30','11:00','14:30','18:45','22:15','01:45','05:15','08:45','12:15','17:30','21:00','00:30','04:00','07:30','11:00','14:30','18:45','22:15','01:45','05:15','08:45','12:15'];
document.getElementById('times').innerHTML = '<rect x="48" y="1316" width="2457" height="1" fill="#fff"/>' + times.map((t, i) =>
  `<rect x="${74 + 70 * i}" y="1317" width="1" height="5" fill="#fff"/><text x="${73.5 + 70 * i}" y="1336" font-size="9.500" textLength="23" lengthAdjust="spacingAndGlyphs">${t}</text>`).join('');
```
